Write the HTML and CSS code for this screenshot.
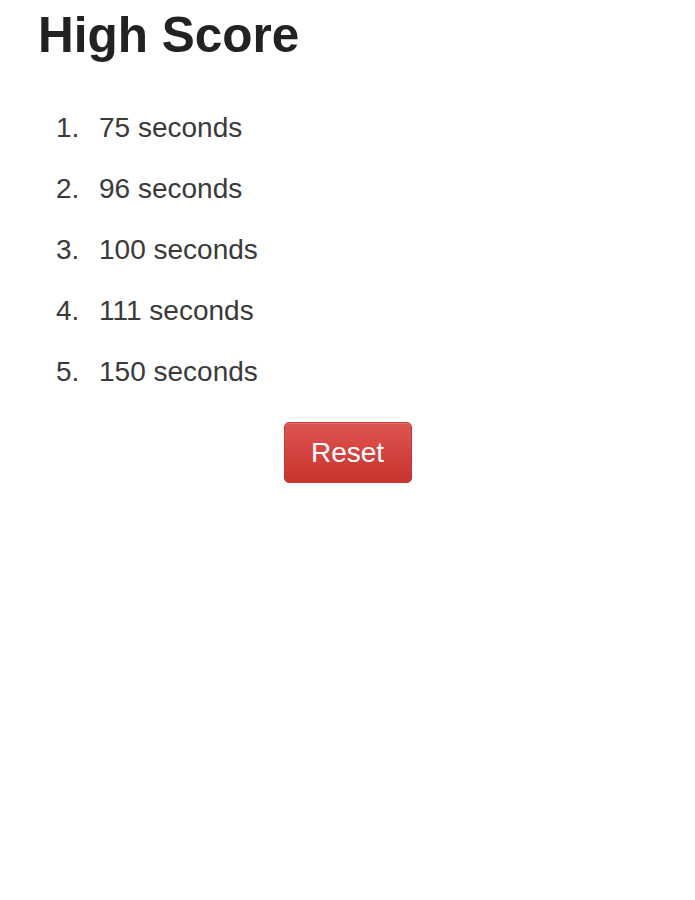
FILE: index.html
```html
<!DOCTYPE html>
<html>
<head>
<meta charset="utf-8">
<link rel="stylesheet" href="styles.css">
</head>
<body>
<div class="page">
  <h1 class="title">High Score</h1>
  <ol class="scores">
    <li class="score"><span class="num">1.</span><span class="val">75 seconds</span></li>
    <li class="score"><span class="num">2.</span><span class="val">96 seconds</span></li>
    <li class="score"><span class="num">3.</span><span class="val">100 seconds</span></li>
    <li class="score"><span class="num">4.</span><span class="val">111 seconds</span></li>
    <li class="score"><span class="num">5.</span><span class="val">150 seconds</span></li>
  </ol>
  <div class="actions">
    <button class="reset">Reset</button>
  </div>
</div>
</body>
</html>
```

FILE: styles.css
```css
html, body {
  margin: 0;
  padding: 0;
  background: #fff;
}
body {
  font-family: "Liberation Sans", Arial, sans-serif;
  color: #333;
}
.page {
  padding: 0 38px;
}
.title {
  margin: 0;
  padding-top: 7px;
  font-size: 49.5px;
  line-height: 56px;
  font-weight: bold;
  color: #222;
}
.scores {
  list-style: none;
  margin: 50px 0 0 0;
  padding: 0 0 0 18px;
  display: flex;
  flex-direction: column;
  gap: 31px;
}
.score {
  display: flex;
  font-size: 28px;
  line-height: 30px;
  color: #3a3a3a;
}
.num {
  width: 43px;
}
.actions {
  display: flex;
  justify-content: center;
  margin-top: 35px;
}
.reset {
  width: 128px;
  height: 61px;
  border: 1px solid #c23a36;
  border-radius: 5px;
  background: linear-gradient(#dd5551, #c9322e);
  color: #fff;
  font-family: "Liberation Sans", Arial, sans-serif;
  font-size: 28px;
  padding: 0;
  box-shadow: inset 0 1px 0 rgba(255,255,255,0.15), 0 1px 2px rgba(0,0,0,0.1);
}
```
